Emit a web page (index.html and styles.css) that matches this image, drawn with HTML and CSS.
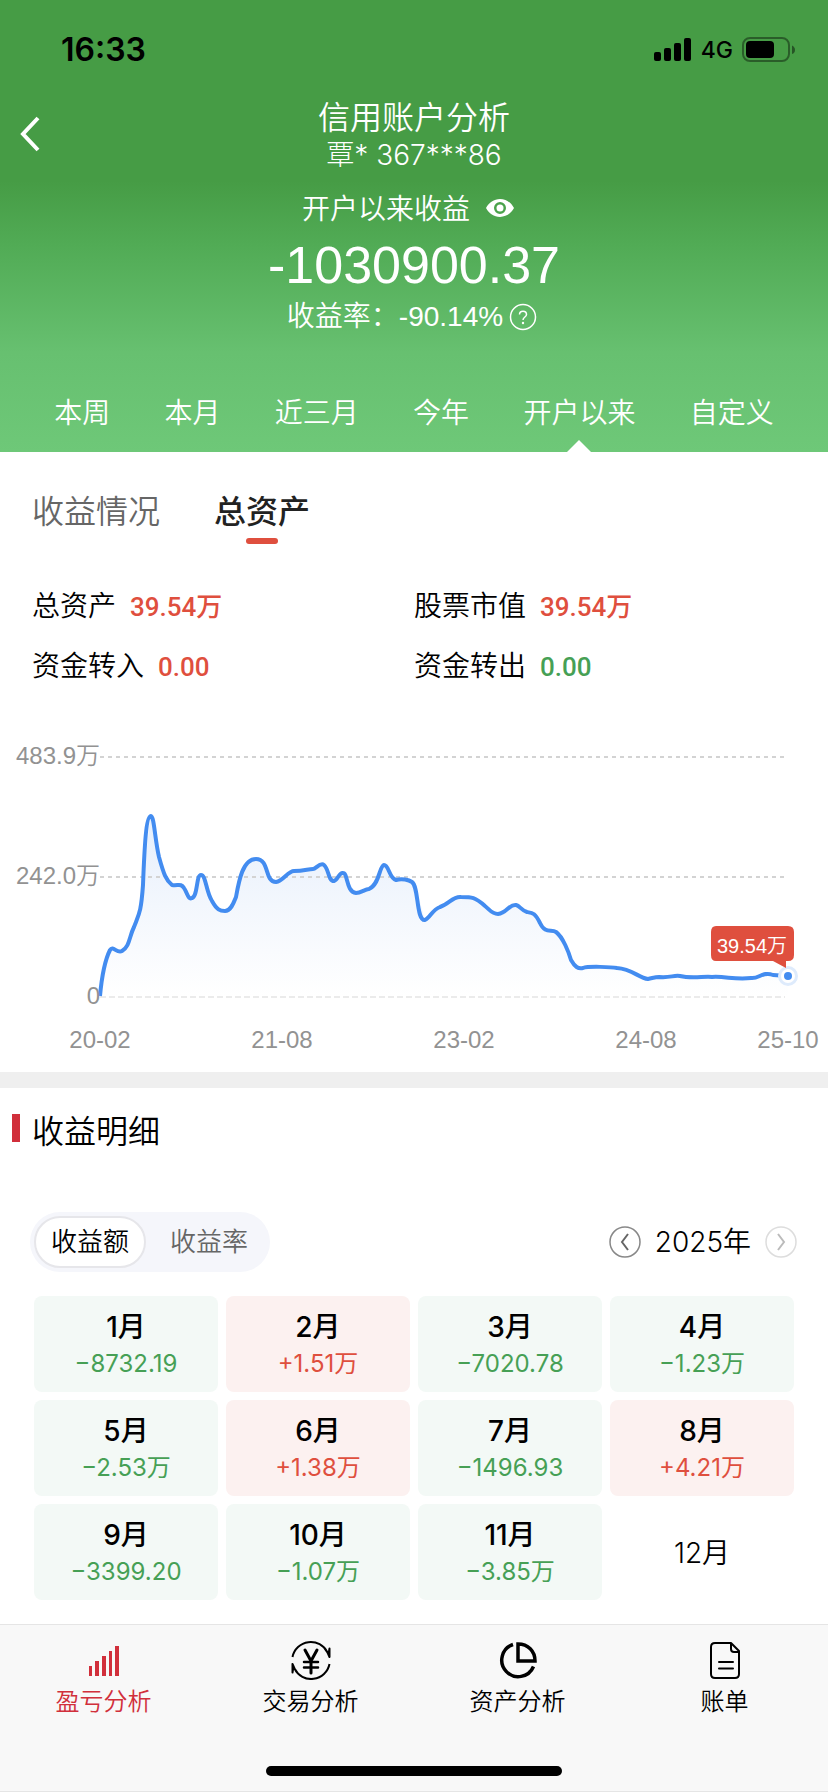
FILE: index.html
```html
<!DOCTYPE html>
<html lang="zh-CN">
<head>
<meta charset="utf-8">
<meta name="viewport" content="width=device-width">
<title>信用账户分析</title>
<link rel="stylesheet" href="styles.css">
</head>
<body>
<div class="app">
  <header class="hero">
    <div class="status">
      <span class="clock">16:33</span>
      <div class="signals">
        <svg width="38" height="24" viewBox="0 0 38 24" aria-hidden="true"><rect y="14" width="7" height="9" rx="2"/><rect x="10" y="10" width="7" height="13" rx="2"/><rect x="20" y="5" width="7" height="18" rx="2"/><rect x="30" width="7" height="23" rx="2"/></svg>
        <span class="network">4G</span>
        <svg width="54" height="26" viewBox="0 0 54 26" aria-hidden="true"><rect x="1" y="1" width="46" height="23" rx="7" fill="none" stroke="#000" stroke-opacity=".4" stroke-width="2"/><rect x="4" y="4" width="28" height="17" rx="4"/><path d="M50 8.500q3 1.500 3 4.500t-3 4z" opacity=".45"/></svg>
      </div>
    </div>
    <div class="titlebar">
      <button class="back" aria-label="返回"><svg width="22" height="36" viewBox="0 0 22 36"><path d="M19 2 4 18l15 16" fill="none" stroke="#fff" stroke-width="4"/></svg></button>
      <div class="titles">
        <h1>信用账户分析</h1>
        <p class="account">覃* 367***86</p>
      </div>
    </div>
    <div class="summary">
      <div class="summary-label">开户以来收益
        <button class="plain eye" aria-label="隐藏金额"><svg width="28" height="20" viewBox="0 0 28 20"><path fill="#fff" fill-rule="evenodd" d="M14 1C8 1 3 4.500 0 10c3 5.500 8 9 14 9s11-3.500 14-9C25 4.500 20 1 14 1zm0 3a6 6 0 1 1 0 12 6 6 0 0 1 0-12z"/><circle cx="14" cy="10" r="3.500" fill="#fff"/></svg></button>
      </div>
      <div class="amount">-1030900.37</div>
      <div class="rate">收益率：-90.14%
        <button class="plain" aria-label="说明"><svg width="28" height="28" viewBox="0 0 28 28" fill="none" stroke="#fff"><circle cx="14" cy="14" r="12.500" stroke-width="1.500"/><path d="M10.500 11.500c0-4.500 7-4.500 7 0 0 2.500-3.500 2.500-3.500 5.500" stroke-width="1.500"/><circle cx="14" cy="20" r="1.200" fill="#fff" stroke="none"/></svg></button>
      </div>
    </div>
    <nav class="periods">
      <button>本周</button><button>本月</button><button>近三月</button><button>今年</button><button class="current">开户以来</button><button>自定义</button>
    </nav>
  </header>

  <main>
    <div class="tabs">
      <button>收益情况</button>
      <button class="current">总资产</button>
    </div>
    <dl class="stats">
      <div><dt>总资产</dt><dd class="up">39.54万</dd></div>
      <div><dt>股票市值</dt><dd class="up">39.54万</dd></div>
      <div><dt>资金转入</dt><dd class="up">0.00</dd></div>
      <div><dt>资金转出</dt><dd class="down">0.00</dd></div>
    </dl>
    <svg class="chart" viewBox="0 0 828 352" role="img" aria-label="总资产走势">
      <defs><linearGradient id="area" x1="0" y1="95" x2="0" y2="277" gradientUnits="userSpaceOnUse"><stop stop-color="#e6effc"/><stop offset=".5" stop-color="#f3f7fd"/><stop offset="1" stop-color="#fff"/></linearGradient></defs>
      <path fill="url(#area)" d="M100 276C102 254 106 238 111 229C115 226 117 235 123 230C130 224 130 212 137 194C144 174 149 100 151 95C154 110 159 140 166 158C169 162 172 166 182 166C187 170 190 185 195 175C198 155 204 155 208 172C219 199 231 198 236 179C240 158 245 139 256 139C268 140 268 162 276 161C284 158 286 152 293 151C306 150 312 149 320 144C328 145 328 161 334 161L342 153L350 166L358 173L374 166L384 145L397 160L410 161L419 178L425 200L455 177L475 179L495 194L514 185L534 194L545 211L559 216L577 248L605 247L647 258L788 257V277H100z"/>
      <g fill="none" stroke="#d3d3d3" stroke-width="2" stroke-dasharray="4 4"><path d="M100 37H785M100 157H785"/><path d="M100 277H785" stroke="#ebebeb" stroke-dasharray="6 3"/></g>
      <path class="line" d="M100 276C102 254 106 238 110 230C113 225 117 234 122 231C130 226 129 217 134 207C139 194 141 193 143 165C145 112 147 96 151 96C154 96 155 120 159 137C164 155 166 160 172 165C178 166 181 163 184 168C188 174 188 180 192 178C198 176 196 155 201 155C206 155 206 172 212 181C217 190 220 191 225 191C231 191 234 182 236 177C239 160 243 139 256 139C270 139 264 162 276 162C283 161 288 151 294 151C304 151 308 149 313 149C316 149 320 142 324 145C329 149 328 161 334 161C338 160 339 152 343 153C348 153 346 172 356 173C361 173 365 169 369 169C380 164 379 146 384 145C389 145 389 158 396 160C402 158 409 160 412 162C419 167 416 201 425 200C430 198 432 190 440 187C449 184 453 176 461 177C472 177 475 177 485 186C490 190 492 194 498 194C507 193 509 184 516 185C520 186 521 190 527 192C533 193 535 193 540 203C545 214 551 209 556 212C563 217 569 233 571 240C575 247 578 249 583 248C588 246 612 247 617 248C632 249 639 258 648 259C653 258 655 257 659 257C671 258 673 255 680 256C692 259 704 256 712 257C725 256 735 260 751 258C759 259 763 251 773 255L788 256"/>
      <circle cx="788" cy="256" r="10" fill="#deebfc"/><circle cx="788" cy="256" r="7" fill="#fff"/><circle cx="788" cy="256" r="4" fill="#438cf0"/>
      <path d="M716 206h72q6 0 6 6v23q0 6-6 6h-2v7l-13-7h-57q-5 0-5-6v-23q0-6 5-6z" fill="#df4f3e"/>
      <text class="tip" x="752" y="233">39.54万</text>
      <g class="axis-y"><text x="100" y="44">483.9万</text><text x="100" y="164">242.0万</text><text x="100" y="284">0</text></g>
      <g class="axis-x"><text x="100" y="328">20-02</text><text x="282" y="328">21-08</text><text x="464" y="328">23-02</text><text x="646" y="328">24-08</text><text x="788" y="328">25-10</text></g>
    </svg>

    <section class="detail">
      <h2>收益明细</h2>
      <div class="controls">
        <div class="toggle"><button class="current">收益额</button><button>收益率</button></div>
        <div class="year">
          <button class="plain" aria-label="上一年"><svg width="32" height="32" viewBox="0 0 32 32" fill="none" stroke="#666"><circle cx="16" cy="16" r="15" stroke="#888" stroke-width="1.500"/><path d="m19 8-6 8 6 8" stroke-width="2"/></svg></button>
          <span>2025年</span>
          <button class="plain" aria-label="下一年"><svg width="32" height="32" viewBox="0 0 32 32" fill="none" stroke="#bbb"><circle cx="16" cy="16" r="15" stroke="#ddd" stroke-width="1.500"/><path d="m13 8 6 8-6 8" stroke-width="2"/></svg></button>
        </div>
      </div>
      <div class="months">
        <div class="month loss"><b>1月</b><span>−8732.19</span></div>
        <div class="month gain"><b>2月</b><span>+1.51万</span></div>
        <div class="month loss"><b>3月</b><span>−7020.78</span></div>
        <div class="month loss"><b>4月</b><span>−1.23万</span></div>
        <div class="month loss"><b>5月</b><span>−2.53万</span></div>
        <div class="month gain"><b>6月</b><span>+1.38万</span></div>
        <div class="month loss"><b>7月</b><span>−1496.93</span></div>
        <div class="month gain"><b>8月</b><span>+4.21万</span></div>
        <div class="month loss"><b>9月</b><span>−3399.20</span></div>
        <div class="month loss"><b>10月</b><span>−1.07万</span></div>
        <div class="month loss"><b>11月</b><span>−3.85万</span></div>
        <div class="month empty">12月</div>
      </div>
    </section>
  </main>

  <footer class="dock">
    <nav class="menu">
      <a href="#profit" class="current"><svg width="40" height="40" viewBox="0 0 40 40" fill="currentColor"><path d="M5 26h3v10H5zM11 21h4v15h-4zM18 16h4v20h-4zM25 11h3v25h-3zM31 6h4v30h-4z"/></svg>盈亏分析</a>
      <a href="#trade"><svg width="40" height="40" viewBox="0 0 40 40" fill="none" stroke="currentColor" stroke-width="2" stroke-linejoin="round"><path d="M1.500 17a18.600 18.600 0 0 1 35-4.500l2 4.500V8.500l-1 6M38.500 24a18.600 18.600 0 0 1-35 4.500l-2-4.500v8.500l1-6"/><path d="m14 10 6 11 6-11M20 21v12" stroke-width="3" stroke-linecap="round"/><path d="M13 22h14M13 27.500h14" stroke-width="2.500" stroke-linecap="round"/></svg>交易分析</a>
      <a href="#assets"><svg width="40" height="40" viewBox="0 0 40 40" fill="none" stroke="currentColor" stroke-width="3.500"><path d="M15 4.500a16.500 16.500 0 1 0 20.500 22"/><path d="M20 4v17h17C37 11 30 4 20 4z"/></svg>资产分析</a>
      <a href="#bill"><svg width="40" height="40" viewBox="0 0 40 40" fill="none" stroke="currentColor" stroke-width="2" stroke-linecap="round" stroke-linejoin="round"><path d="M10 3h16l8 8v23q0 4-4 4H10q-4 0-4-4V7q0-4 4-4zM26 3v6q0 3 3 3h5"/><path d="M14 22h14M14 28.500h14"/></svg>账单</a>
    </nav>
    <div class="home"></div>
  </footer>
</div>
</body>
</html>
```
FILE: styles.css
```css
* { box-sizing: border-box; }
body { margin: 0; background: #fff; color: #000; font-family: "Liberation Sans", "Noto Sans CJK SC", sans-serif; font-size: 28px; font-weight: 350; line-height: 40px; }
h1, h2, p, dl, dd { margin: 0; font-weight: inherit; }
button { border: 0; padding: 0; background: none; color: inherit; font: inherit; }
svg { display: block; flex: none; }
.app { min-height: 100vh; display: flex; flex-direction: column; }
main { flex: 1; }

.hero { color: #fff; background: linear-gradient(#469c45 0, #469c45 40%, #51ab55 54%, #67c070 78%, #6ec878 100%); }
.status { height: 100px; padding: 0 32px 0 61px; display: flex; align-items: center; justify-content: space-between; color: #000; }
.clock { font: 600 32px/40px Inter, sans-serif; }
.signals { display: flex; align-items: center; gap: 9px; }
.network { font: 500 23px/32px Inter, sans-serif; }
.titlebar { position: relative; height: 75px; text-align: center; }
.back { position: absolute; left: 19px; top: 16px; }
h1 { font-size: 32px; line-height: 36px; }
.account { font-family: Inter, "Noto Sans CJK SC", sans-serif; font-weight: 300; line-height: 38px; }
.summary { padding-top: 15px; display: flex; flex-direction: column; align-items: center; }
.summary-label { display: flex; align-items: center; gap: 16px; padding-right: 12px; line-height: 40px; }
.eye { padding-bottom: 4px; }
.amount { font-size: 52px; line-height: 70px; }
.rate { display: flex; align-items: center; gap: 6px; padding-right: 4px; line-height: 34px; }
.periods { display: flex; justify-content: space-evenly; padding-top: 60px; }
.periods button { position: relative; height: 58px; padding-bottom: 18px; line-height: 40px; }
.periods .current::after { content: ""; position: absolute; left: 50%; bottom: 0; margin-left: -12px; border: 12px solid transparent; border-top: 0; border-bottom-color: #fff; }

.tabs { display: flex; gap: 54px; padding: 36px 32px 0; font-size: 32px; line-height: 48px; color: #666; }
.tabs button { position: relative; padding-bottom: 8px; }
.tabs .current { color: #222; font-weight: 500; }
.tabs .current::after { content: ""; position: absolute; left: 50%; bottom: 0; width: 32px; height: 6px; margin-left: -16px; border-radius: 3px; background: #df4f3e; }
.stats { display: grid; grid-template-columns: 1fr 1fr; row-gap: 20px; padding: 43px 32px 0; }
.stats div { display: flex; gap: 14px; height: 40px; }
.stats dd { font: 500 26px/40px Roboto, "Noto Sans CJK SC", sans-serif; }
.up { color: #df4f3e; }
.down { color: #46a055; }
.chart { width: 100%; height: auto; margin-top: 33px; }
.line { fill: none; stroke: #438cf0; stroke-width: 4; stroke-linejoin: round; }
.chart text { font-size: 24px; fill: #929292; }
.axis-y { text-anchor: end; }
.axis-x { text-anchor: middle; }
.chart .tip { font-size: 20px; fill: #fff; text-anchor: middle; }

.detail { border-top: 16px solid #efefef; padding-bottom: 24px; }
h2 { position: relative; padding: 20px 32px 0; font-size: 32px; line-height: 48px; }
h2::before { content: ""; position: absolute; left: 12px; top: 26px; width: 8px; height: 28px; background: #d12f3b; }
.controls { display: flex; justify-content: space-between; align-items: center; padding: 56px 31px 0 30px; }
.toggle { display: flex; padding: 4px; border-radius: 30px; background: #f5f6fb; font-size: 26px; color: #666; }
.toggle button { height: 52px; padding: 0 18px 0 24px; }
.toggle .current { padding: 0 15px; border: 2px solid #e6e6ea; border-radius: 26px; background: #fff; color: #000; }
.year { display: flex; align-items: center; gap: 14px; font-family: Inter, "Noto Sans CJK SC", sans-serif; }
.months { display: grid; grid-template-columns: repeat(4, 1fr); gap: 8px; padding: 24px 34px 0; font-family: Inter, "Noto Sans CJK SC", sans-serif; }
.month { height: 96px; padding-top: 13px; display: flex; flex-direction: column; align-items: center; border-radius: 8px; }
.month b { font-weight: 500; line-height: 36px; }
.month span { font-size: 24px; font-weight: 400; line-height: 38px; }
.loss { background: #f3f9f6; }
.loss span { color: #46a055; }
.gain { background: #fcf1f0; }
.gain span { color: #df4f3e; }
.month.empty { padding: 2px 0 0; justify-content: center; }

.dock { border-top: 1px solid #e5e5e5; border-bottom: 1px solid #e5e5e5; background: #f8f8f8; padding-bottom: 15px; }
.menu { display: grid; grid-template-columns: repeat(4, 1fr); padding-top: 15px; }
.menu a { display: flex; flex-direction: column; align-items: center; gap: 4px; font-size: 24px; line-height: 36px; color: #000; text-decoration: none; }
.menu .current { color: #d12f3b; }
.home { width: 296px; height: 10px; margin: 46px auto 0; border-radius: 5px; background: #000; }
```
